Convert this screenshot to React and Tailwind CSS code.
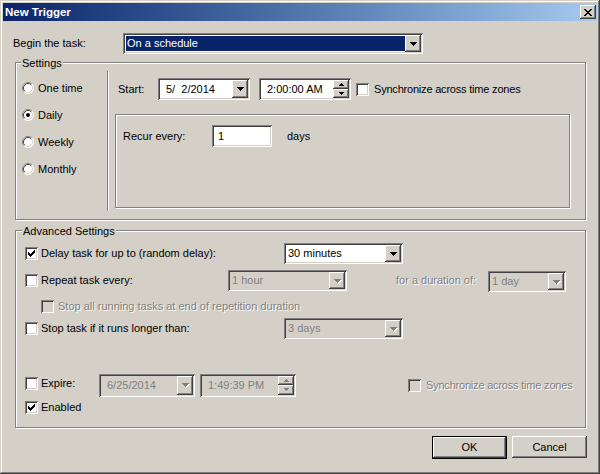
// ─── Classic (Win2000-style) bevels ───────────────────────────────────────────

const FACE = "bg-[#d4d0c8]";
const RAISED = "shadow-[inset_-1px_-1px_#404040,inset_1px_1px_#fff,inset_-2px_-2px_#808080,inset_2px_2px_#d4d0c8]";
const SUNKEN = "shadow-[inset_1px_1px_#808080,inset_-1px_-1px_#fff,inset_2px_2px_#404040,inset_-2px_-2px_#d4d0c8]";
const ETCHED = "border border-[#808080] shadow-[inset_1px_1px_#fff,1px_1px_#fff]";
const DIS_TEXT = "text-[#808080] [text-shadow:1px_1px_0_#fff]";

// ─── Small pieces ─────────────────────────────────────────────────────────────

function ArrowDown({ disabled }) {
    return (
        <svg width="7" height="4" viewBox="0 0 7 4" shapeRendering="crispEdges" className="overflow-visible">
            {disabled && <polygon points="1,1 8,1 4.5,5" fill="#fff" />}
            <polygon points="0,0 7,0 3.5,4" fill={disabled ? "#808080" : "#000"} />
        </svg>
    );
}

function TinyArrow({ up, disabled }) {
    const color = disabled ? "#808080" : "#000";
    return (
        <svg width="5" height="3" viewBox="0 0 5 3" shapeRendering="crispEdges">
            <polygon points={up ? "2.5,0 5,3 0,3" : "0,0 5,0 2.5,3"} fill={color} />
        </svg>
    );
}

function DropButton({ disabled }) {
    return (
        <div className={`w-[16px] self-stretch flex items-center justify-center ${FACE} ${RAISED}`}>
            <ArrowDown disabled={disabled} />
        </div>
    );
}

function Combo({ className, text, disabled, selected }) {
    return (
        <div className={`flex p-[2px] ${SUNKEN} ${disabled ? FACE : "bg-white"} ${className}`}>
            {selected ? (
                <div className="flex-1 flex m-[1px] mr-0">
                    <span className="flex-1 flex items-center bg-[#0a246a] text-white pl-[1px]">{text}</span>
                </div>
            ) : (
                <span className={`flex-1 flex items-center pl-[2px] ${disabled ? "text-[#808080]" : ""}`}>{text}</span>
            )}
            <DropButton disabled={disabled} />
        </div>
    );
}

function DatePick({ className, text, disabled }) {
    return (
        <div className={`flex p-[2px] ${SUNKEN} ${disabled ? FACE : "bg-white"} ${className}`}>
            <span className={`flex-1 flex items-center pl-[6px] whitespace-pre ${disabled ? "text-[#808080]" : ""}`}>{text}</span>
            <DropButton disabled={disabled} />
        </div>
    );
}

function TimePick({ className, text, disabled }) {
    return (
        <div className={`flex p-[2px] ${SUNKEN} ${disabled ? FACE : "bg-white"} ${className}`}>
            <span className={`flex-1 flex items-center pl-[6px] ${disabled ? "text-[#808080]" : ""}`}>{text}</span>
            <div className="w-[16px] flex flex-col">
                <div className={`flex-1 flex items-center justify-center ${FACE} ${RAISED}`}>
                    <TinyArrow up disabled={disabled} />
                </div>
                <div className={`flex-1 flex items-center justify-center ${FACE} ${RAISED}`}>
                    <TinyArrow disabled={disabled} />
                </div>
            </div>
        </div>
    );
}

function Check({ checked, disabled }) {
    return (
        <div className={`w-[13px] h-[13px] shrink-0 flex items-center justify-center ${SUNKEN} ${disabled ? FACE : "bg-white"}`}>
            {checked && (
                <svg width="7" height="7" viewBox="0 0 7 7" shapeRendering="crispEdges">
                    <path d="M0 2 L2 4 L6 0 L7 0 L7 3 L2 7 L0 5 Z" fill="#000" />
                </svg>
            )}
        </div>
    );
}

function Radio({ checked }) {
    return (
        <svg width="12" height="12" viewBox="0 0 12 12" className="shrink-0">
            <circle cx="6" cy="6" r="5.5" fill="#fff" />
            <path d="M2.11 9.89 A5.5 5.5 0 0 1 9.89 2.11" fill="none" stroke="#808080" />
            <path d="M9.89 2.11 A5.5 5.5 0 0 1 2.11 9.89" fill="none" stroke="#fff" />
            <path d="M2.82 9.18 A4.5 4.5 0 0 1 9.18 2.82" fill="none" stroke="#404040" />
            <path d="M9.18 2.82 A4.5 4.5 0 0 1 2.82 9.18" fill="none" stroke="#d4d0c8" />
            {checked && <circle cx="6" cy="6" r="2" fill="#000" />}
        </svg>
    );
}

// ─── Dialog ───────────────────────────────────────────────────────────────────

export default function App() {
    return (
        <div className={`w-[600px] h-[474px] flex flex-col ${FACE} shadow-[inset_-1px_-1px_#404040,inset_1px_1px_#d4d0c8,inset_-2px_-2px_#808080,inset_2px_2px_#fff] font-['Liberation_Sans',Arial,sans-serif] text-[11px] leading-[13px] text-black select-none`}>

            {/* Title bar */}
            <div className="mx-[3px] mt-[3px] h-[18px] flex items-center justify-between bg-linear-to-r from-[#0a246a] to-[#a6caf0] pl-[2px] pr-[1px]">
                <span className="font-bold text-white text-[11.5px]">New Trigger</span>
                <div className={`w-[16px] h-[14px] flex items-center justify-center ${FACE} ${RAISED}`}>
                    <svg width="8" height="7" viewBox="0 0 8 7" shapeRendering="crispEdges">
                        <path d="M0 0h2l2 2.2L6 0h2L5 3.5 8 7H6L4 4.8 2 7H0l3-3.5z" fill="#000" />
                    </svg>
                </div>
            </div>

            {/* Begin the task */}
            <div className="flex items-center h-[21px] mt-[12px] pl-[13px]">
                <span className="w-[110px]">Begin the task:</span>
                <Combo className="w-[300px] h-[21px]" text="On a schedule" selected />
            </div>

            {/* Settings */}
            <div className={`relative ml-[15px] mt-[8px] w-[571px] h-[158px] flex ${ETCHED}`}>
                <span className={`absolute left-[5px] -top-[6px] px-[1px] ${FACE}`}>Settings</span>

                <div className="w-[91px] pt-[15px] pl-[6px] flex flex-col gap-[7px]">
                    {[["One time", false], ["Daily", true], ["Weekly", false], ["Monthly", false]].map(([label, on]) => (
                        <div key={label} className="h-[20px] flex items-center gap-[4px]">
                            <Radio checked={on} />
                            <span>{label}</span>
                        </div>
                    ))}
                </div>

                <div className="mt-[8px] h-[140px] w-[2px] border-l border-r border-l-[#808080] border-r-white" />

                <div className="flex flex-col pl-[6px]">
                    <div className="mt-[15px] h-[22px] flex items-center pl-[3px]">
                        <span className="w-[40px]">Start:</span>
                        <DatePick className="w-[92px] h-[22px]" text="5/  2/2014" />
                        <TimePick className="ml-[9px] w-[92px] h-[22px]" text="2:00:00 AM" />
                        <div className="ml-[5px]"><Check /></div>
                        <span className="ml-[5px] tracking-[-0.2px]">Synchronize across time zones</span>
                    </div>

                    <div className={`mt-[14px] w-[455px] h-[94px] ${ETCHED}`}>
                        <div className="mt-[10px] pl-[7px] h-[22px] flex items-center">
                            <span className="w-[89px]">Recur every:</span>
                            <div className={`w-[60px] h-[22px] bg-white ${SUNKEN} flex items-center pl-[6px]`}>1</div>
                            <span className="ml-[15px]">days</span>
                        </div>
                    </div>
                </div>
            </div>

            {/* Advanced Settings */}
            <div className={`relative ml-[15px] mt-[10px] w-[571px] h-[198px] pl-[9px] ${ETCHED}`}>
                <span className={`absolute left-[6px] -top-[6px] px-[1px] ${FACE}`}>Advanced Settings</span>

                <div className="mt-[12px] h-[21px] flex items-center">
                    <div className="w-[259px] flex items-center gap-[3px]">
                        <Check checked />
                        <span>Delay task for up to (random delay):</span>
                    </div>
                    <Combo className="w-[119px] h-[21px]" text="30 minutes" />
                </div>

                <div className="mt-[6px] h-[21px] flex items-center">
                    <div className="w-[203px] flex items-center gap-[3px]">
                        <Check />
                        <span>Repeat task every:</span>
                    </div>
                    <Combo className="w-[119px] h-[21px]" text="1 hour" disabled />
                    <span className={`ml-[49px] w-[92px] ${DIS_TEXT}`}>for a duration of:</span>
                    <Combo className="w-[78px] h-[21px] mt-[2px]" text="1 day" disabled />
                </div>

                <div className="mt-[7px] h-[16px] pl-[16px] flex items-center gap-[4px]">
                    <Check disabled />
                    <span className={DIS_TEXT}>Stop all running tasks at end of repetition duration</span>
                </div>

                <div className="mt-[4px] h-[21px] flex items-center">
                    <div className="w-[259px] flex items-center gap-[3px]">
                        <Check />
                        <span>Stop task if it runs longer than:</span>
                    </div>
                    <Combo className="w-[119px] h-[21px]" text="3 days" disabled />
                </div>

                <div className="mt-[34px] h-[24px] flex items-center">
                    <div className="w-[74px] mb-[4px] flex items-center gap-[3px]">
                        <Check />
                        <span>Expire:</span>
                    </div>
                    <DatePick className="w-[96px] h-[23px]" text="6/25/2014" disabled />
                    <TimePick className="ml-[5px] w-[96px] h-[23px]" text="1:49:39 PM" disabled />
                    <div className="ml-[112px]"><Check disabled /></div>
                    <span className={`ml-[5px] tracking-[-0.2px] ${DIS_TEXT}`}>Synchronize across time zones</span>
                </div>

                <div className="mt-[2px] h-[16px] flex items-center gap-[3px]">
                    <Check checked />
                    <span>Enabled</span>
                </div>
            </div>

            {/* Buttons */}
            <div className="mt-[8px] pr-[13px] flex justify-end gap-[5px]">
                <div className="w-[75px] h-[23px] border border-black">
                    <div className={`w-full h-full flex items-center justify-center ${FACE} ${RAISED}`}>OK</div>
                </div>
                <div className={`w-[75px] h-[22px] flex items-center justify-center ${FACE} ${RAISED}`}>Cancel</div>
            </div>
        </div>
    );
}
